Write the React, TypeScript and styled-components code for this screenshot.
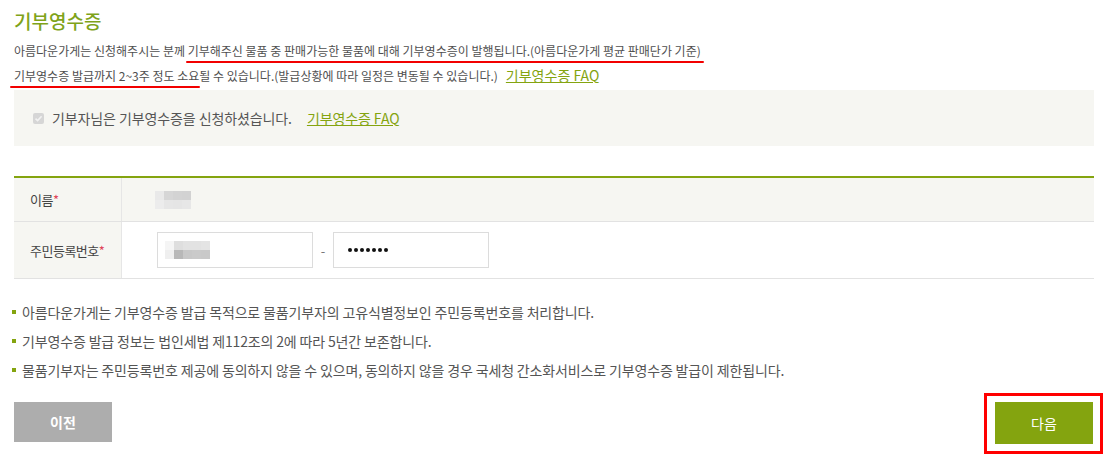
import React from 'react'
import styled, { createGlobalStyle } from 'styled-components'

const GREEN = '#84a40f'

const Global = createGlobalStyle`
  body {
    margin: 0;
    background: #fff;
    font-family: 'Noto Sans CJK KR', 'Noto Sans', sans-serif;
    color: #555;
  }
`

const Page = styled.div`
  width: 1080px;
  padding: 0 14px;
`

const Title = styled.h2`
  margin: 0;
  padding-top: 8px;
  height: 26px;
  font-size: 19px;
  font-weight: 500;
  line-height: 26px;
  color: #7fa31a;
`

const Desc = styled.p`
  margin: 4px 0 0;
  font-size: 12px;
  line-height: 25px;
  color: #4f4f4f;
`

const Marked = styled.span<{ $left: number; $right: number }>`
  position: relative;
  &::after {
    content: '';
    position: absolute;
    left: ${p => p.$left}px;
    right: ${p => p.$right}px;
    bottom: -4px;
    height: 2px;
    border-radius: 2px;
    background: #f20000;
  }
`

const FaqLink = styled.a<{ $gap: number }>`
  color: ${GREEN};
  text-decoration: underline;
  margin-left: ${p => p.$gap}px;
  font-size: 14px;
`

const AgreeBox = styled.div`
  margin-top: 2px;
  height: 56px;
  background: #f6f6f2;
  display: flex;
  align-items: center;
  padding-left: 19px;
  font-size: 14px;
  letter-spacing: -0.1px;
  color: #555;
`

const Check = styled.span`
  width: 11px;
  height: 11px;
  border-radius: 2px;
  background: #d6d6d6;
  display: inline-flex;
  align-items: center;
  justify-content: center;
  margin-right: 8px;
`

const Table = styled.div`
  margin-top: 30px;
  border-top: 2px solid ${GREEN};
`

const Row = styled.div<{ $tall?: boolean; $shade?: boolean }>`
  display: grid;
  grid-template-columns: 108px 1fr;
  height: ${p => (p.$tall ? 56 : 43)}px;
  border-bottom: 1px solid #e2e2e2;
  background: ${p => (p.$shade ? '#f6f6f2' : '#fff')};
`

const Label = styled.div`
  background: #f6f6f2;
  border-right: 1px solid #e6e6e6;
  display: flex;
  align-items: center;
  padding-left: 16px;
  font-size: 13px;
  letter-spacing: -0.5px;
  color: #444;
  b {
    color: #e0455a;
    font-weight: 400;
  }
`

const Cell = styled.div<{ $pad: number }>`
  display: flex;
  align-items: center;
  padding-left: ${p => p.$pad}px;
`

const Blur = styled.div<{ $cols: number }>`
  display: grid;
  grid-template-columns: repeat(${p => p.$cols}, 9px);
  grid-auto-rows: 9px;
`

const Px = styled.span<{ $c: string }>`
  background: ${p => p.$c};
`

const Input = styled.div`
  box-sizing: border-box;
  width: 156px;
  height: 36px;
  border: 1px solid #dcdcdc;
  background: #fff;
  display: flex;
  align-items: center;
  padding-left: 7px;
`

const Dash = styled.span`
  width: 20px;
  text-align: center;
  color: #777;
  font-size: 13px;
`

const Dots = styled.span`
  display: flex;
  gap: 2px;
  padding-left: 7px;
  i {
    width: 4px;
    height: 4px;
    border-radius: 50%;
    background: #111;
  }
`

const Notes = styled.ul`
  list-style: none;
  margin: 18px 0 0;
  padding: 0;
`

const Note = styled.li`
  display: flex;
  align-items: center;
  height: 29px;
  font-size: 14px;
  letter-spacing: -0.15px;
  color: #555;
  &::before {
    content: '';
    width: 4px;
    height: 4px;
    background: ${GREEN};
    margin: 0 6px 0 -2px;
  }
`

const Footer = styled.div`
  margin-top: 9px;
  display: flex;
  justify-content: space-between;
  align-items: flex-start;
`

const Btn = styled.button<{ $primary?: boolean }>`
  width: 98px;
  height: ${p => (p.$primary ? 42 : 40)}px;
  border: 0;
  background: ${p => (p.$primary ? GREEN : '#adadad')};
  color: #fff;
  font-family: inherit;
  font-size: 14px;
  font-weight: ${p => (p.$primary ? 400 : 700)};
  margin-top: ${p => (p.$primary ? 0 : 9)}px;
`

const Highlight = styled.div`
  border: 3px solid #f00;
  padding: 6px 7px 7px 8px;
  margin-right: -9px;
`

const nameBlur = ['#e9e9e9', '#d6d6d6', '#d3d3d3', '#d2d2d2', '#ececec', '#e6e6e6', '#e5e5e5', '#e7e7e7']
const idBlur = ['#f5f5f5', '#dedede', '#e2e2e2', '#e2e2e2', '#e4e4e4', '#efefef', '#b8b8b8', '#c8c8c8', '#cacaca', '#c9c9c9']

const notes = [
  '아름다운가게는 기부영수증 발급 목적으로 물품기부자의 고유식별정보인 주민등록번호를 처리합니다.',
  '기부영수증 발급 정보는 법인세법 제112조의 2에 따라 5년간 보존합니다.',
  '물품기부자는 주민등록번호 제공에 동의하지 않을 수 있으며, 동의하지 않을 경우 국세청 간소화서비스로 기부영수증 발급이 제한됩니다.',
]

export default function App() {
  return (
    <Page>
      <Global />
      <Title>기부영수증</Title>
      <Desc>
        아름다운가게는 신청해주시는 분께{' '}
        <Marked $left={-2} $right={-3}>
          기부해주신 물품 중 판매가능한 물품에 대해 기부영수증이 발행됩니다.(아름다운가게 평균 판매단가 기준)
        </Marked>
        <br />
        <Marked $left={-4} $right={-1}>기부영수증 발급까지 2~3주 정도 소요</Marked>될 수 있습니다.(발급상황에 따라 일정은 변동될 수 있습니다.)
        <FaqLink $gap={8}>기부영수증 FAQ</FaqLink>
      </Desc>

      <AgreeBox>
        <Check>
          <svg width="9" height="9" viewBox="0 0 9 9">
            <path d="M1.5 4.6 L3.6 6.6 L7.6 2.2" fill="none" stroke="#f2f2f2" strokeWidth="1.6" />
          </svg>
        </Check>
        기부자님은 기부영수증을 신청하셨습니다.
        <FaqLink $gap={15}>기부영수증 FAQ</FaqLink>
      </AgreeBox>

      <Table>
        <Row $shade>
          <Label>
            이름<b>*</b>
          </Label>
          <Cell $pad={33}>
            <Blur $cols={4}>
              {nameBlur.map((c, i) => (
                <Px key={i} $c={c} />
              ))}
            </Blur>
          </Cell>
        </Row>
        <Row $tall>
          <Label>
            주민등록번호<b>*</b>
          </Label>
          <Cell $pad={35}>
            <Input>
              <Blur $cols={5}>
                {idBlur.map((c, i) => (
                  <Px key={i} $c={c} />
                ))}
              </Blur>
            </Input>
            <Dash>-</Dash>
            <Input>
              <Dots>
                {Array.from({ length: 7 }, (_, i) => (
                  <i key={i} />
                ))}
              </Dots>
            </Input>
          </Cell>
        </Row>
      </Table>

      <Notes>
        {notes.map(n => (
          <Note key={n}>{n}</Note>
        ))}
      </Notes>

      <Footer>
        <Btn>이전</Btn>
        <Highlight>
          <Btn $primary>다음</Btn>
        </Highlight>
      </Footer>
    </Page>
  )
}
